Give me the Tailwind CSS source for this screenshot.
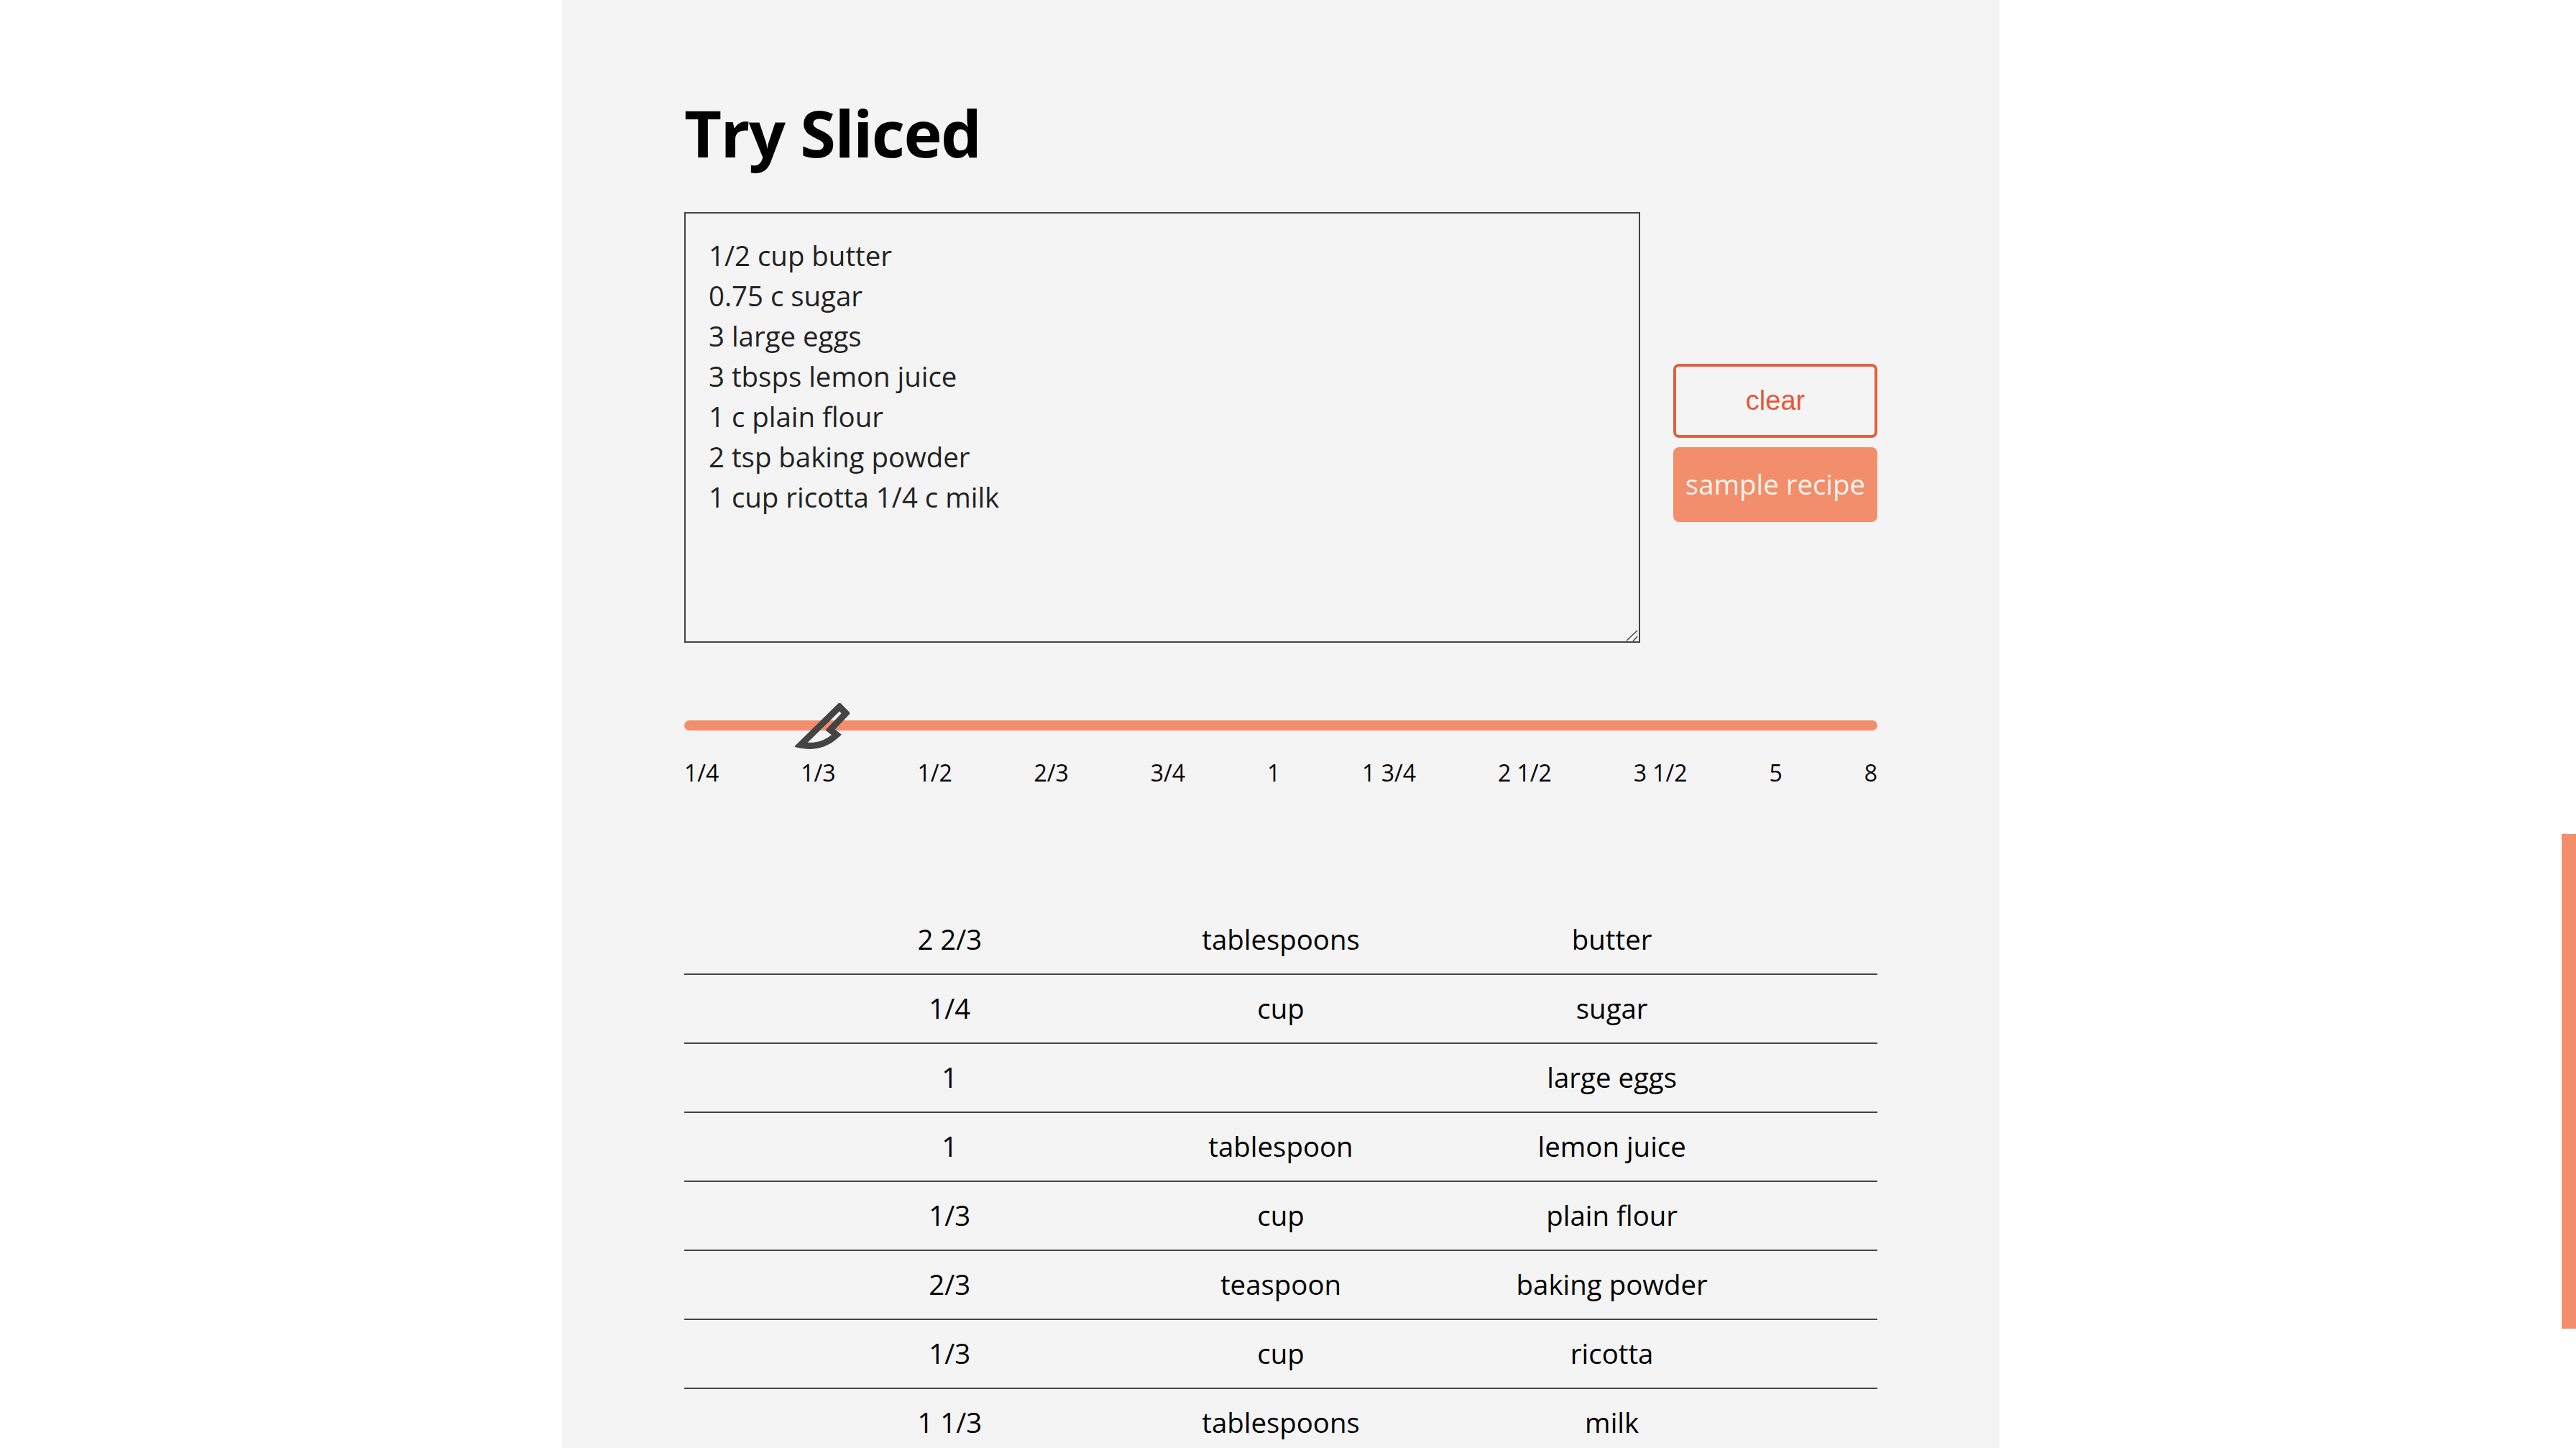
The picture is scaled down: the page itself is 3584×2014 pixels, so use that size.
<!DOCTYPE html>
<html lang="en">
<head>
  <meta charset="UTF-8">
  <title>Try Sliced</title>
  <script src="https://cdn.jsdelivr.net/npm/@tailwindcss/browser@4"></script>
</head>
<body class="bg-white h-screen overflow-hidden font-['Open_Sans',sans-serif] text-black">
  <!-- scroll progress bar -->
  <div class="fixed right-0 top-[1160px] w-[20px] h-[688px] bg-[#f28e6b]"></div>

  <main class="ml-[782px] w-[2000px] h-screen overflow-hidden bg-[#f4f4f4] px-[170px] pt-[128px]">
    <h1 class="text-[90px] tracking-[-1.6px] leading-[112px] font-bold">Try Sliced</h1>

    <div class="flex mt-[55px]">
      <div class="relative w-[1330px] h-[599px]">
        <textarea class="w-full h-full block resize-none border-2 border-[#444] bg-transparent px-[32px] py-[30px] text-[38.4px] leading-[56px] text-[#222] outline-none">1/2 cup butter
0.75 c sugar
3 large eggs
3 tbsps lemon juice
1 c plain flour
2 tsp baking powder
1 cup ricotta 1/4 c milk</textarea>
        <svg class="absolute right-[2px] bottom-[2px]" width="20" height="20" viewBox="0 0 20 20" fill="none">
          <path d="M3 19 L18 5 M12 20 L18 13" stroke="#444" stroke-width="1.5"/>
        </svg>
      </div>
      <div class="ml-[46px] mt-[211px] w-[284px] flex flex-col gap-[13px]">
        <button class="h-[103px] rounded-[8px] border-4 border-[#e2603f] font-['Liberation_Sans',sans-serif] text-[38px] text-[#e2583a]">clear</button>
        <button class="h-[104px] rounded-[8px] bg-[#f28e6b] text-[38.4px] text-[#fdf3ee]">sample recipe</button>
      </div>
    </div>

    <!-- slider -->
    <div class="relative mt-[108px] h-[14px] rounded-full bg-[#f28e6b]">
      <svg class="absolute left-[154px] top-[-24px]" width="76" height="64" viewBox="0 0 76 64" fill="none">
        <path d="M62 5 L71 14 L49 37 L58 44 C44 57 27 62 8 58 Z" stroke="#444" stroke-width="9" stroke-linejoin="miter"/>
      </svg>
    </div>
    <div class="flex justify-between mt-[39px] text-[32px] leading-[40px]">
      <span>1/4</span><span>1/3</span><span>1/2</span><span>2/3</span><span>3/4</span><span>1</span><span>1 3/4</span><span>2 1/2</span><span>3 1/2</span><span>5</span><span>8</span>
    </div>

    <!-- results -->
    <div class="mt-[165px] text-[38.4px]">
      <div class="grid grid-cols-3 h-[96px] px-[139px] items-center text-center border-b-2 border-[#444]"><span>2 2/3</span><span>tablespoons</span><span>butter</span></div>
      <div class="grid grid-cols-3 h-[96px] px-[139px] items-center text-center border-b-2 border-[#444]"><span>1/4</span><span>cup</span><span>sugar</span></div>
      <div class="grid grid-cols-3 h-[96px] px-[139px] items-center text-center border-b-2 border-[#444]"><span>1</span><span></span><span>large eggs</span></div>
      <div class="grid grid-cols-3 h-[96px] px-[139px] items-center text-center border-b-2 border-[#444]"><span>1</span><span>tablespoon</span><span>lemon juice</span></div>
      <div class="grid grid-cols-3 h-[96px] px-[139px] items-center text-center border-b-2 border-[#444]"><span>1/3</span><span>cup</span><span>plain flour</span></div>
      <div class="grid grid-cols-3 h-[96px] px-[139px] items-center text-center border-b-2 border-[#444]"><span>2/3</span><span>teaspoon</span><span>baking powder</span></div>
      <div class="grid grid-cols-3 h-[96px] px-[139px] items-center text-center border-b-2 border-[#444]"><span>1/3</span><span>cup</span><span>ricotta</span></div>
      <div class="grid grid-cols-3 h-[96px] px-[139px] items-center text-center border-b-2 border-[#444]"><span>1 1/3</span><span>tablespoons</span><span>milk</span></div>
    </div>
  </main>
</body>
</html>
